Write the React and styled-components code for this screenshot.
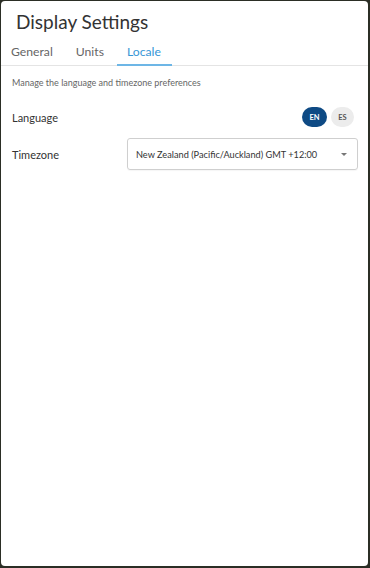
import styled, { createGlobalStyle } from "styled-components";

// ---------------
// - Global reset -
// ---------------
const Global = createGlobalStyle`
  html, body {
    margin: 0;
    padding: 0;
    height: 100%;
    background: #2b2e25;
  }
  #root {
    height: 100%;
  }
  * {
    box-sizing: border-box;
  }
`;

const tabs = ["General", "Units", "Locale"];

const App = () => {
  return (
    <>
      <Global />
      <Panel>
        <Titulo>Display Settings</Titulo>
        <Tabs>
          {tabs.map((t) => (
            <Tab key={t} $active={t === "Locale"}>
              {t}
            </Tab>
          ))}
        </Tabs>
        <Contenido>
          <Descripcion>Manage the language and timezone preferences</Descripcion>
          <Fila>
            <Etiqueta>Language</Etiqueta>
            <Pills>
              <Pill $active>EN</Pill>
              <Pill>ES</Pill>
            </Pills>
          </Fila>
          <Fila>
            <Etiqueta>Timezone</Etiqueta>
            <Select>
              <span>New Zealand (Pacific/Auckland) GMT +12:00</span>
              <Caret />
            </Select>
          </Fila>
        </Contenido>
      </Panel>
    </>
  );
};

export default App;

// ---------------------
// - Styled Components -
// ---------------------
const Panel = styled.div`
  height: calc(100% - 3px);
  margin: 1px 2px 2px 1px;
  background: #fff;
  border-radius: 4px;
  font-family: Lato, "Noto Sans", sans-serif;
  color: #333;
  overflow: hidden;
`;

const Titulo = styled.h1`
  margin: 0;
  padding: 10px 0 0 15px;
  font-size: 19px;
  font-weight: 400;
  line-height: 22px;
  color: #333;
`;

const Tabs = styled.div`
  display: flex;
  gap: 2px;
  margin-top: 9px;
  border-bottom: 1px solid #e4e4e4;
`;

const Tab = styled.div`
  padding: 2px 11px 5px 10px;
  font-size: 12.2px;
  line-height: 15px;
  color: ${(p) => (p.$active ? "#3596d6" : "#666")};
  border-bottom: 2px solid ${(p) => (p.$active ? "#6db6e6" : "transparent")};
  margin-bottom: -1px;
`;

const Contenido = styled.div`
  padding: 11px 10px 0 11px;
`;

const Descripcion = styled.p`
  margin: 0 0 18px 0;
  font-size: 9px;
  line-height: 12px;
  color: #666;
`;

const Fila = styled.div`
  display: flex;
  justify-content: space-between;
  align-items: center;
  margin-bottom: 11px;
`;

const Etiqueta = styled.span`
  font-size: 11px;
  color: #333;
`;

const Pills = styled.div`
  display: flex;
  gap: 4px;
  margin-right: 4px;
`;

const Pill = styled.div`
  width: ${(p) => (p.$active ? "25px" : "23px")};
  height: 20px;
  border-radius: 10px;
  display: flex;
  align-items: center;
  justify-content: center;
  font-size: 7.5px;
  font-weight: 700;
  color: ${(p) => (p.$active ? "#fff" : "#555")};
  background: ${(p) => (p.$active ? "#0e4a84" : "#ececec")};
`;

const Select = styled.div`
  width: 231px;
  height: 32px;
  border: 1px solid #cfcfcf;
  border-radius: 3px;
  display: flex;
  align-items: center;
  justify-content: space-between;
  padding: 0 8px 0 8px;
  font-size: 9.2px;
  color: #333;
  box-shadow: 0 1px 1px rgba(0, 0, 0, 0.04);
`;

const Caret = styled.span`
  width: 0;
  height: 0;
  border-left: 3px solid transparent;
  border-right: 3px solid transparent;
  border-top: 3px solid #777;
  margin-right: 2px;
`;
